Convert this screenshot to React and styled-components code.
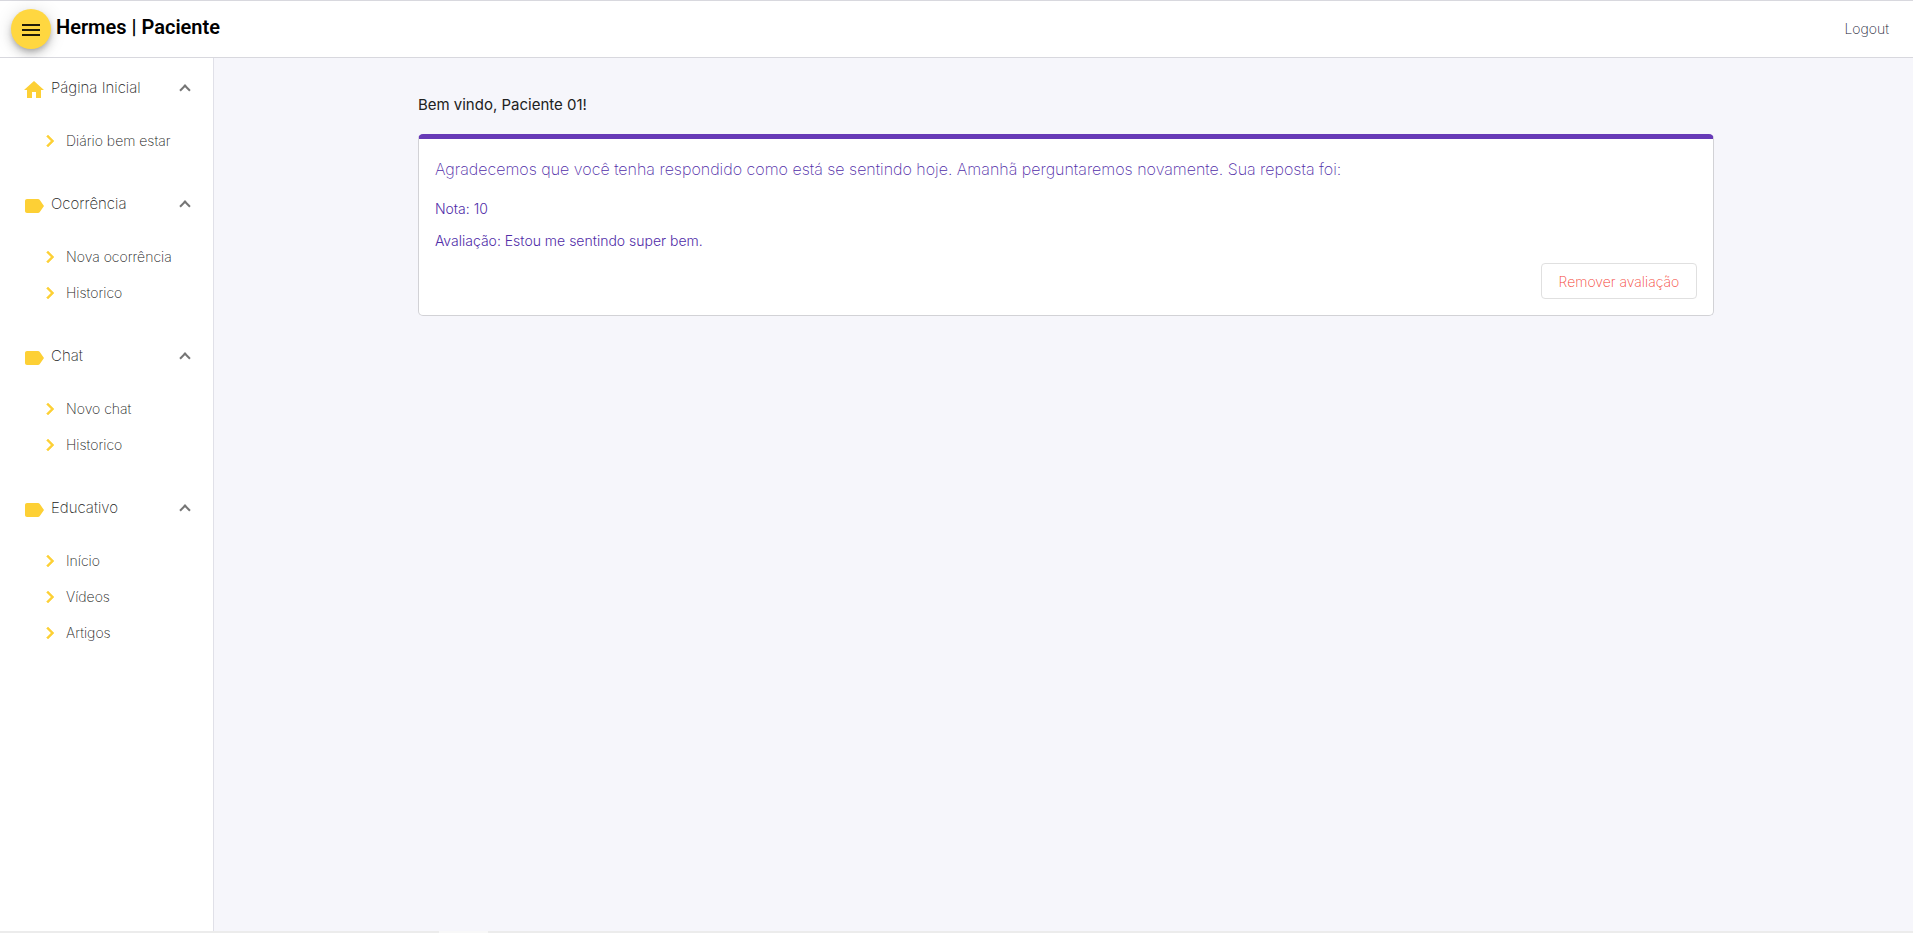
import React from "react";
import styled, { createGlobalStyle } from "styled-components";
import { MdHome, MdLabel, MdMenu } from "react-icons/md";

const GlobalStyle = createGlobalStyle`
  *, *::before, *::after { box-sizing: border-box; }
  body {
    margin: 0;
    background: #f6f6fb;
    font-family: Inter, "Open Sans", sans-serif;
    font-size: 14px;
    font-weight: 200;
  }
`;

const Page = styled.div`
  display: flex;
  flex-direction: column;
  min-height: 100vh;
  border-top: 1px solid #d8d8de;
`;

const Header = styled.header`
  display: flex;
  align-items: center;
  gap: 5px;
  height: 57px;
  padding: 0 24px 0 11px;
  background: #fff;
  border-bottom: 1px solid #d8d8de;
`;

const MenuButton = styled.button`
  display: flex;
  align-items: center;
  justify-content: center;
  width: 40px;
  height: 40px;
  padding: 2px 0 0;
  border: 0;
  border-radius: 50%;
  background: #ffd740;
  color: rgba(0, 0, 0, 0.87);
  font-size: 24px;
  cursor: pointer;
  box-shadow: 0 3px 5px -1px rgba(0, 0, 0, 0.2), 0 6px 10px rgba(0, 0, 0, 0.14),
    0 1px 18px rgba(0, 0, 0, 0.12);
`;

const Brand = styled.h1`
  margin: 0;
  padding-bottom: 4px;
  color: #000;
  font: 600 20px/24px Roboto, sans-serif;
`;

const Logout = styled.a`
  margin-left: auto;
  color: #222236;
  font-size: 14px;
  line-height: 20px;
  text-decoration: none;
`;

const Body = styled.div`
  display: flex;
  flex: 1;
`;

const Sidebar = styled.nav`
  flex: 0 0 214px;
  padding: 6px 22px 0;
  background: #fff;
  border-right: 1px solid #e0e0e8;
`;

const Group = styled.section`
  padding-bottom: 21px;
`;

const GroupButton = styled.button`
  display: flex;
  align-items: center;
  gap: 5px;
  width: 100%;
  height: 48px;
  padding: 0;
  border: 0;
  background: none;
  color: #222;
  font: inherit;
  font-size: 15px;
  line-height: 20px;
  text-align: left;
  cursor: pointer;

  svg {
    margin-top: 4px;
    font-size: 24px;
    color: #fdd035;
  }
`;

const Caret = styled.span`
  width: 8px;
  height: 8px;
  margin: 4px 2px 0 auto;
  border: solid #757575;
  border-width: 2px 0 0 2px;
  transform: rotate(45deg);
`;

const Items = styled.ul`
  margin: 0;
  padding: 11px 0 0 16px;
  list-style: none;
`;

const ItemLink = styled.a`
  display: flex;
  align-items: center;
  gap: 4px;
  height: 36px;
  color: #222;
  font-size: 14px;
  line-height: 20px;
  white-space: nowrap;
  text-decoration: none;
`;

const ArrowIcon = styled.svg`
  width: 24px;
  height: 24px;
  fill: #fdd035;
  stroke: #fdd035;
  stroke-width: 0.5;
`;

const Main = styled.main`
  flex: 1;
  min-width: 0;
  padding: 35px 0;
`;

const Content = styled.div`
  display: flex;
  flex-direction: column;
  gap: 17px;
  margin: 0 11.7% 0 12%;
`;

const Greeting = styled.h2`
  margin: 0;
  color: #212121;
  font-size: 15px;
  font-weight: 400;
  line-height: 24px;
`;

const Card = styled.section`
  display: flex;
  flex-direction: column;
  gap: 12px;
  padding: 16px;
  background: #fff;
  border: 1px solid #d2d2d6;
  border-top: 5px solid #673ab7;
  border-radius: 5px;
  color: #512da8;
`;

const Lead = styled.p`
  margin: 0 0 4px;
  font-size: 16px;
  line-height: 28px;
`;

const Detail = styled.p`
  margin: 0;
  font-size: 14px;
  font-weight: 300;
  line-height: 20px;
`;

const RemoveButton = styled.button`
  align-self: flex-end;
  height: 36px;
  padding: 0 17px;
  border: 1px solid #e0e0e0;
  border-radius: 4px;
  background: #fff;
  color: #f44336;
  font: inherit;
  cursor: pointer;
`;

const BottomBar = styled.footer`
  height: 2px;
  padding-left: 439px;
  background: #ececec;
`;

const BottomMark = styled.div`
  width: 49px;
  height: 2px;
  background: #f8f8f8;
`;

const groups = [
  { title: "Página Inicial", Icon: MdHome, items: ["Diário bem estar"] },
  { title: "Ocorrência", Icon: MdLabel, items: ["Nova ocorrência", "Historico"] },
  { title: "Chat", Icon: MdLabel, items: ["Novo chat", "Historico"] },
  { title: "Educativo", Icon: MdLabel, items: ["Início", "Vídeos", "Artigos"] },
];

export default function App() {
  return (
    <Page>
      <GlobalStyle />
      <Header>
        <MenuButton type="button" aria-label="Menu">
          <MdMenu />
        </MenuButton>
        <Brand>Hermes | Paciente</Brand>
        <Logout href="#logout">Logout</Logout>
      </Header>
      <Body>
        <Sidebar>
          {groups.map(({ title, Icon, items }) => (
            <Group key={title}>
              <GroupButton type="button" aria-expanded="true">
                <Icon />
                {title}
                <Caret />
              </GroupButton>
              <Items>
                {items.map((item) => (
                  <li key={item}>
                    <ItemLink href="#">
                      <ArrowIcon viewBox="0 0 24 24" aria-hidden="true">
                        <path d="M10 6L8.59 7.41 13.17 12l-4.58 4.59L10 18l6-6z" />
                      </ArrowIcon>
                      {item}
                    </ItemLink>
                  </li>
                ))}
              </Items>
            </Group>
          ))}
        </Sidebar>
        <Main>
          <Content>
            <Greeting>Bem vindo, Paciente 01!</Greeting>
            <Card>
              <Lead>
                Agradecemos que você tenha respondido como está se sentindo
                hoje. Amanhã perguntaremos novamente. Sua reposta foi:
              </Lead>
              <Detail>Nota: 10</Detail>
              <Detail>Avaliação: Estou me sentindo super bem.</Detail>
              <RemoveButton type="button">Remover avaliação</RemoveButton>
            </Card>
          </Content>
        </Main>
      </Body>
      <BottomBar>
        <BottomMark />
      </BottomBar>
    </Page>
  );
}
